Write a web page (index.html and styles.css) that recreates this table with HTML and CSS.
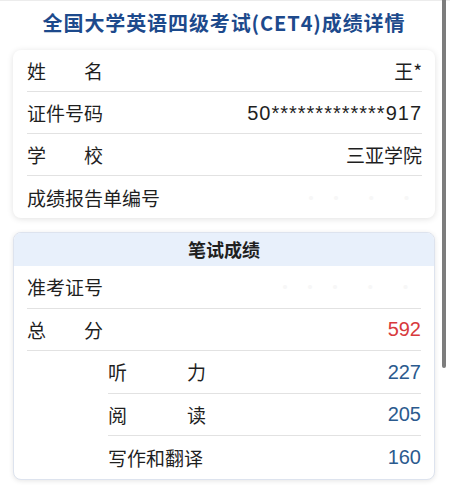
FILE: index.html
```html
<!DOCTYPE html>
<html lang="zh-CN">
<head>
<meta charset="utf-8">
<title>CET4成绩详情</title>
<link rel="stylesheet" href="styles.css">
</head>
<body>
<div class="page">
  <h1 class="title">全国大学英语四级考试(CET4)成绩详情</h1>

  <section class="card">
    <div class="row">
      <span class="label label-4">姓<i></i>名</span>
      <span class="value">王*</span>
    </div>
    <div class="row">
      <span class="label">证件号码</span>
      <span class="value num idno">50*************917</span>
    </div>
    <div class="row">
      <span class="label label-4">学<i></i>校</span>
      <span class="value">三亚学院</span>
    </div>
    <div class="row">
      <span class="label">成绩报告单编号</span>
      <span class="value blurred">·· · ·</span>
    </div>
  </section>

  <section class="card card-score">
    <div class="card-head">笔试成绩</div>
    <div class="row">
      <span class="label">准考证号</span>
      <span class="value blurred">··· · ·</span>
    </div>
    <div class="row">
      <span class="label label-4">总<i></i>分</span>
      <span class="value num total">592</span>
    </div>
    <div class="row sub">
      <span class="label label-5">听<i></i>力</span>
      <span class="value num part">227</span>
    </div>
    <div class="row sub">
      <span class="label label-5">阅<i></i>读</span>
      <span class="value num part">205</span>
    </div>
    <div class="row sub">
      <span class="label">写作和翻译</span>
      <span class="value num part">160</span>
    </div>
  </section>
</div>
<div class="scrollbar"></div>
</body>
</html>
```
FILE: styles.css
```css
html, body {
  margin: 0;
  padding: 0;
  background: #ffffff;
}

body {
  font-family: "Noto Sans CJK SC", "Noto Sans", sans-serif;
  color: #1f1f1f;
  width: 450px;
  height: 489px;
  overflow: hidden;
  position: relative;
}

.page {
  display: flex;
  flex-direction: column;
  padding: 0 15px 0 13px;
  border-top: 1px solid #ececec;
}

.title {
  margin: 0;
  height: 43px;
  line-height: 43px;
  font-size: 20px;
  font-weight: 700;
  color: #1d4a8c;
  text-align: center;
  letter-spacing: 0.9px;
  white-space: nowrap;
}

.card {
  margin-top: 6px;
  background: #fff;
  border-radius: 8px;
  box-shadow: 0 1px 6px rgba(0, 0, 0, 0.12);
  display: flex;
  flex-direction: column;
}

.card-score {
  margin-top: 14px;
  border: 1px solid #dde3ee;
  box-shadow: 0 1px 5px rgba(0, 0, 0, 0.10);
  overflow: hidden;
}

.card-head {
  height: 33px;
  line-height: 33px;
  background: #e8f0fb;
  text-align: center;
  font-size: 18px;
  font-weight: 700;
  color: #1f1f1f;
}

.row {
  height: 42px;
  margin: 0 13px 0 14px;
  display: flex;
  align-items: center;
  justify-content: space-between;
  border-bottom: 1px solid #e2e2e2;
  box-sizing: border-box;
  font-size: 19px;
  line-height: 1;
}

.card-score .row {
  height: 42.5px;
  margin-left: 13px;
}

.row:last-child {
  border-bottom: none;
}

.card-score .row.sub {
  margin-left: 94px;
}

.label {
  display: flex;
  justify-content: space-between;
  white-space: nowrap;
  color: #1f1f1f;
}

.label i {
  flex: 1;
}

.label-4 {
  width: 76px;
}

.label-5 {
  width: 98px;
}

.value {
  white-space: nowrap;
  color: #1f1f1f;
}

.num {
  font-family: "Liberation Sans", "Noto Sans", sans-serif;
  font-size: 20px;
}

.idno {
  letter-spacing: 1px;
}

.total {
  color: #d83a3d;
}

.part {
  color: #2b5a8e;
}

.blurred {
  color: #f7f7f7;
  letter-spacing: 6px;
}

.scrollbar {
  position: absolute;
  top: 0;
  left: 442px;
  width: 4px;
  height: 368px;
  background: #7d7d7d;
  border-radius: 0 0 2px 2px;
}
```
